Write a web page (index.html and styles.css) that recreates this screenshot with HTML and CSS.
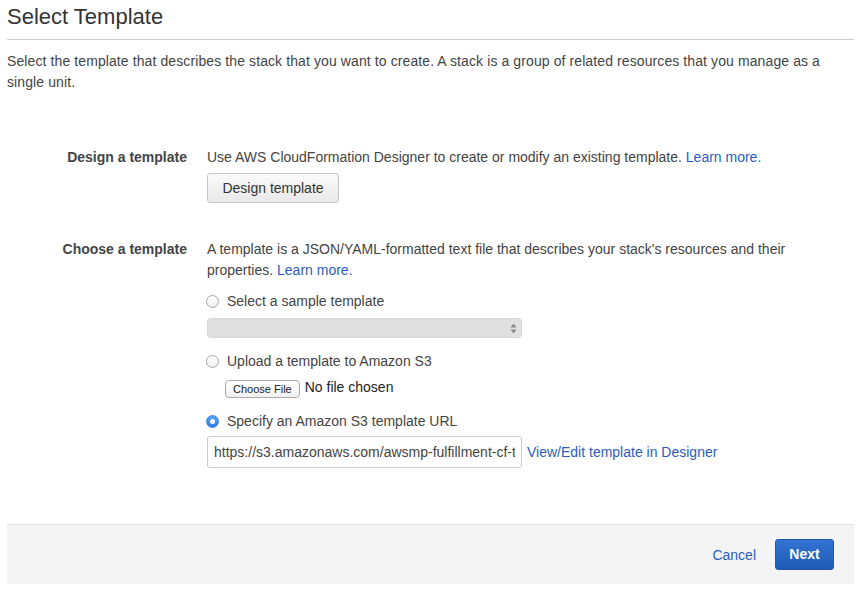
FILE: index.html
```html
<!DOCTYPE html>
<html>
<head>
<meta charset="utf-8">
<link rel="stylesheet" href="styles.css">
</head>
<body>
<div class="page">
  <h1 class="title">Select Template</h1>
  <p class="intro">Select the template that describes the stack that you want to create. A stack is a group of related resources that you manage as a single unit.</p>

  <div class="form">
    <div class="row row-design">
      <div class="label">Design a template</div>
      <div class="content">
        <div class="text">Use AWS CloudFormation Designer to create or modify an existing template. <a class="link" href="#">Learn more.</a></div>
        <button class="btn">Design template</button>
      </div>
    </div>

    <div class="row row-choose">
      <div class="label">Choose a template</div>
      <div class="content">
        <div class="text">A template is a JSON/YAML-formatted text file that describes your stack's resources and their properties. <a class="link" href="#">Learn more.</a></div>

        <label class="radio-row r1"><span class="radio"></span><span>Select a sample template</span></label>
        <div class="select">
          <svg width="7" height="11" viewBox="0 0 7 11"><path d="M3.5 0.5 L6.5 4.5 L0.5 4.5 Z" fill="#8a8a8a"/><path d="M3.5 10.5 L6.5 6.5 L0.5 6.5 Z" fill="#8a8a8a"/></svg>
        </div>

        <label class="radio-row r2"><span class="radio"></span><span>Upload a template to Amazon S3</span></label>
        <div class="file-row"><span class="file-btn">Choose File</span><span class="file-text">No file chosen</span></div>

        <label class="radio-row r3"><span class="radio checked"></span><span>Specify an Amazon S3 template URL</span></label>
        <div class="url-row">
          <input class="url" type="text" value="https://s3.amazonaws.com/awsmp-fulfillment-cf-templates-prod/template.json">
          <a class="link" href="#">View/Edit template in Designer</a>
        </div>
      </div>
    </div>
  </div>

  <div class="footer">
    <a class="link cancel" href="#">Cancel</a>
    <button class="btn-primary">Next</button>
  </div>
</div>
</body>
</html>
```

FILE: styles.css
```css
html, body {
  margin: 0;
  padding: 0;
  background: #fff;
}
body {
  font-family: "Liberation Sans", Arial, Helvetica, sans-serif;
  font-size: 14px;
  color: #444;
}
.page {
  padding: 0 14px 0 7px;
}
.title {
  margin: 0;
  padding-top: 4px;
  font-size: 22px;
  font-weight: normal;
  line-height: 26px;
  color: #333;
  padding-bottom: 9px;
  border-bottom: 1px solid #ccc;
}
.intro {
  margin: 0;
  padding-top: 11px;
  line-height: 21px;
  color: #444;
  max-width: 818px;
  letter-spacing: 0.1px;
}
.form {
  padding-top: 54px;
}
.row {
  display: grid;
  grid-template-columns: 180px 1fr;
  column-gap: 20px;
}
.row-choose {
  margin-top: 36px;
}
.label {
  text-align: right;
  font-weight: bold;
  line-height: 21px;
  color: #444;
}
.content {
  display: flex;
  flex-direction: column;
  align-items: flex-start;
}
.text {
  line-height: 21px;
  padding-right: 50px;
}
.link {
  color: #2c5cc0;
  text-decoration: none;
}
.btn {
  margin-top: 5px;
  width: 132px;
  height: 30px;
  border: 1px solid #c6c6c6;
  border-radius: 3px;
  background: linear-gradient(#fbfbfb, #e8e8e8);
  font-family: inherit;
  font-size: 14px;
  color: #333;
  padding: 0;
}
.radio-row {
  display: flex;
  align-items: center;
  gap: 8px;
  height: 20px;
  color: #444;
}
.r1 { margin-top: 10px; }
.r2 { margin-top: 13px; }
.r3 { margin-top: 13px; }
.radio {
  box-sizing: border-box;
  width: 13px;
  height: 13px;
  border-radius: 50%;
  border: 1px solid #a8a8a8;
  background: linear-gradient(#fff, #f0f0f0);
  margin-left: -1px;
  display: flex;
  align-items: center;
  justify-content: center;
}
.radio.checked {
  border-color: #3a86ef;
  background: linear-gradient(#5aa2f7, #2f7ceb);
}
.radio.checked::after {
  content: "";
  width: 5px;
  height: 5px;
  border-radius: 50%;
  background: #fff;
}
.select {
  box-sizing: border-box;
  margin-top: 7px;
  width: 315px;
  height: 20px;
  border-radius: 4px;
  background: #e0e0e0;
  border: 1px solid #d6d6d6;
  display: flex;
  align-items: center;
  justify-content: flex-end;
  padding-right: 4px;
}
.file-row {
  margin-top: 9px;
  margin-left: 18px;
  display: flex;
  align-items: center;
  gap: 5px;
  height: 18px;
}
.file-btn {
  box-sizing: border-box;
  height: 18px;
  padding: 0 7px;
  border: 1px solid #aaa;
  border-radius: 4px;
  background: linear-gradient(#fff, #f1f1f1);
  font-size: 11px;
  line-height: 16px;
  color: #222;
}
.file-text {
  color: #222;
  margin-top: -5px;
}
.url-row {
  margin-top: 5px;
  display: flex;
  align-items: center;
  gap: 5px;
}
.url {
  box-sizing: border-box;
  width: 315px;
  height: 32px;
  border: 1px solid #ccc;
  border-radius: 3px;
  padding: 0 6px;
  font-family: inherit;
  font-size: 14px;
  color: #444;
  background: #fff;
  outline: none;
}
.footer {
  margin-top: 56px;
  height: 59px;
  border-top: 1px solid #e2e2e2;
  background: #f4f4f4;
  display: flex;
  align-items: center;
  justify-content: flex-end;
  padding-right: 20px;
  gap: 19px;
}
.cancel {
  font-size: 14px;
}
.btn-primary {
  width: 59px;
  height: 31px;
  margin-top: -1px;
  border: 1px solid #1e57b0;
  border-radius: 3px;
  background: linear-gradient(#3373d2, #1f5bb6);
  color: #fff;
  font-family: inherit;
  font-size: 14px;
  font-weight: bold;
  padding: 0;
}
```
